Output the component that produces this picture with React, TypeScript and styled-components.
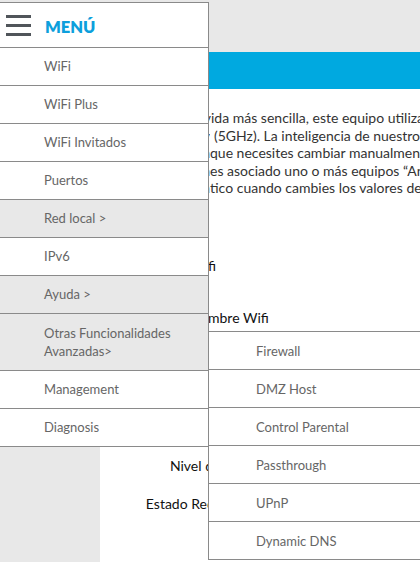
import React from "react";
import styled, { createGlobalStyle } from "styled-components";

const Global = createGlobalStyle`
  html, body { margin: 0; padding: 0; background: #ffffff; }
  body { font-family: Lato, "Open Sans", Arial, sans-serif; }
  * { box-sizing: border-box; }
`;

const Page = styled.div`
  position: relative;
  width: 420px;
  height: 562px;
  overflow: hidden;
  background: #ffffff;
  display: flex;
  flex-direction: column;
`;

const TopBand = styled.div`
  height: 52px;
  flex: none;
  background: #e8e8e8;
`;

const Banner = styled.div`
  height: 37px;
  flex: none;
  background: #00a9e0;
`;

const Main = styled.div`
  flex: 1;
  display: grid;
  grid-template-columns: 100px 1fr;
`;

const Sidebar = styled.div`
  background: #e8e8e8;
`;

const Content = styled.div`
  display: flex;
  flex-direction: column;
  padding-top: 20px;
  color: #333333;
  font-size: 14px;
  line-height: 17.5px;
  white-space: nowrap;
`;

const Block = styled.div<{ $mt?: number }>`
  margin-top: ${(p) => p.$mt ?? 0}px;
`;

const TextLine = styled.div<{ $dark?: boolean }>`
  display: flex;
  white-space: nowrap;
  color: ${(p) => (p.$dark ? "#111111" : "#333333")};
`;

const Clip = styled.span<{ $w: number }>`
  display: inline-flex;
  justify-content: flex-end;
  flex: none;
  width: ${(p) => p.$w}px;
  overflow: hidden;
  white-space: nowrap;
`;

const Visible = styled.span<{ $lead?: number }>`
  padding-left: ${(p) => p.$lead ?? 0}px;
`;

const FormGrid = styled.div`
  display: grid;
  grid-template-columns: 144px 1fr;
  row-gap: 20.5px;
  margin-top: 131px;
  color: #111111;
`;

const Label = styled.div`
  text-align: right;
`;

const Value = styled.div`
  padding-left: 12px;
`;

const Menu = styled.nav`
  position: absolute;
  top: 2px;
  left: 0;
  width: 209px;
  background: #ffffff;
  border-right: 1px solid #8a8a8a;
  font-size: 13px;
  color: #666666;
`;

const MenuHeader = styled.div`
  height: 46px;
  border-top: 1px solid #8a8a8a;
  border-bottom: 1px solid #8a8a8a;
  display: flex;
  align-items: center;
  gap: 14px;
  padding-left: 6px;

  svg {
    margin-top: 4px;
    flex: none;
  }
`;

const MenuTitle = styled.span`
  font-family: Lato, sans-serif;
  font-weight: 800;
  font-size: 16.5px;
  color: #0d9fdc;
  padding-top: 4px;
`;

const MenuItem = styled.div<{ $gray?: boolean; $pad?: number }>`
  min-height: 38px;
  display: flex;
  align-items: center;
  padding: ${(p) => (p.$pad ?? 0) + 1}px 8px ${(p) => p.$pad ?? 0}px 44px;
  line-height: 17.5px;
  border-bottom: 1px solid #8a8a8a;
  background: ${(p) => (p.$gray ? "#e8e8e8" : "#ffffff")};
`;

const SubMenu = styled.div`
  position: absolute;
  top: 331px;
  left: 208px;
  width: 240px;
  background: #ffffff;
  border-top: 1px solid #8a8a8a;
  border-left: 1px solid #8a8a8a;
  font-size: 13px;
  color: #666666;
`;

const SubItem = styled.div`
  height: 38px;
  display: flex;
  align-items: center;
  padding: 1px 0 0 47px;
  border-bottom: 1px solid #8a8a8a;
`;

const Burger = () => (
  <svg width="25" height="24" viewBox="0 0 25 24" aria-hidden="true">
    <rect x="0" y="0" width="25" height="3" fill="#50555a" />
    <rect x="0" y="9" width="25" height="3" fill="#50555a" />
    <rect x="0" y="18" width="25" height="3" fill="#50555a" />
  </svg>
);

const paragraph: [number, string, string, number][] = [
  [111, "Para hacerte la v", "ida más sencilla, este equipo utiliza las dos bandas", 0],
  [110, "bandas (2.4GHz) y", "(5GHz). La inteligencia de nuestro router", 4],
  [110, "elige la mejor sin", "que necesites cambiar manualmente la banda.", 0],
  [110, "Si tien", "es asociado uno o más equipos “Android”", 0],
  [110, "de forma automá", "tico cuando cambies los valores de la red", 0],
];

const menuItems: { label: string; gray?: boolean }[] = [
  { label: "WiFi" },
  { label: "WiFi Plus" },
  { label: "WiFi Invitados" },
  { label: "Puertos" },
  { label: "Red local >", gray: true },
  { label: "IPv6" },
  { label: "Ayuda >", gray: true },
];

const subItems = ["Firewall", "DMZ Host", "Control Parental", "Passthrough", "UPnP", "Dynamic DNS"];

export default function App() {
  return (
    <>
      <Global />
      <Page>
        <TopBand />
        <Banner />
        <Main>
          <Sidebar />
          <Content>
            <Block>
              {paragraph.map(([w, hidden, visible, lead], i) => (
                <TextLine key={i}>
                  <Clip $w={w}>{hidden}</Clip>
                  <Visible $lead={lead}>{visible}</Visible>
                </TextLine>
              ))}
            </Block>
            <Block $mt={60}>
              <TextLine $dark>
                <Clip $w={108}>Configuración Wi</Clip>
                <Visible>fi</Visible>
              </TextLine>
            </Block>
            <Block $mt={34.5}>
              <TextLine $dark>
                <Clip $w={108}>No</Clip>
                <Visible>mbre Wifi</Visible>
              </TextLine>
            </Block>
            <FormGrid>
              <Label>Nivel de red</Label>
              <Value>Alto</Value>
              <Label>Estado Red Wifi</Label>
              <Value>Activa</Value>
            </FormGrid>
          </Content>
        </Main>

        <Menu>
          <MenuHeader>
            <Burger />
            <MenuTitle>MENÚ</MenuTitle>
          </MenuHeader>
          {menuItems.map((m) => (
            <MenuItem key={m.label} $gray={m.gray}>
              {m.label}
            </MenuItem>
          ))}
          <MenuItem $gray $pad={10}>
            Otras Funcionalidades
            <br />
            Avanzadas&gt;
          </MenuItem>
          <MenuItem>Management</MenuItem>
          <MenuItem>Diagnosis</MenuItem>
        </Menu>

        <SubMenu>
          {subItems.map((s) => (
            <SubItem key={s}>{s}</SubItem>
          ))}
        </SubMenu>
      </Page>
    </>
  );
}
